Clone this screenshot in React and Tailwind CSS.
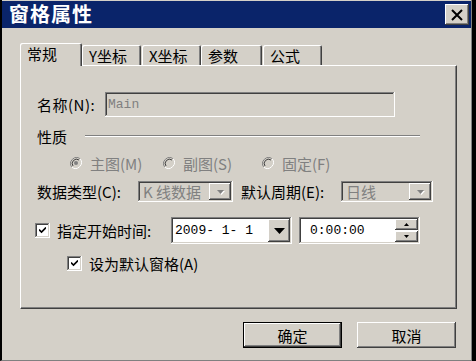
import React from "react";

const raised =
  "shadow-[inset_-1px_-1px_#404040,inset_1px_1px_#ffffff,inset_-2px_-2px_#808080]";
const sunken =
  "shadow-[inset_-1px_-1px_#ffffff,inset_1px_1px_#808080,inset_-2px_-2px_#d4d0c8,inset_2px_2px_#404040]";

function Arrow({ color = "#000", disabled = false, big = false }) {
  if (big) {
    return (
      <svg width="11" height="6" viewBox="0 0 11 6">
        <path d="M0 0h11L5.5 6z" fill={color} />
      </svg>
    );
  }
  return (
    <svg width="9" height="6" viewBox="0 0 9 6">
      {disabled && <path d="M2 2h7l-3.5 4z" fill="#fff" />}
      <path d="M1 1h7l-3.5 4z" fill={color} />
    </svg>
  );
}

function DropButton({ disabled, big, className }) {
  return (
    <div className={`flex items-center justify-center bg-[#d4d0c8] ${raised} ${className}`}>
      <Arrow color={disabled ? "#808080" : "#000"} disabled={disabled} big={big} />
    </div>
  );
}

function Check() {
  return (
    <div className={`w-[15px] h-[15px] bg-white flex items-center justify-center ${sunken}`}>
      <svg width="7" height="7" viewBox="0 0 7 7">
        <path d="M0 2.5l2.5 2.5L7 0.5" stroke="#000" strokeWidth="1.6" fill="none" />
      </svg>
    </div>
  );
}

function Radio({ checked, label }) {
  return (
    <div className="flex items-center gap-[8px] text-[#808080]">
      <svg width="12" height="12" viewBox="0 0 12 12">
        <path d="M10.2 1.8A6 6 0 0 0 1.8 10.2" stroke="#808080" fill="none" />
        <path d="M10.2 1.8A6 6 0 0 1 1.8 10.2" stroke="#ffffff" fill="none" />
        <circle cx="6" cy="6" r="4.5" fill="#d4d0c8" />
        <path d="M9 3A4.3 4.3 0 0 0 3 9" stroke="#404040" fill="none" />
        {checked && <circle cx="6" cy="6" r="2" fill="#808080" />}
      </svg>
      <span>{label}</span>
    </div>
  );
}

const tabs = [
  { name: "常规", w: "w-[62px]", active: true },
  { name: "Y坐标", w: "w-[59px]" },
  { name: "X坐标", w: "w-[59px] ml-px" },
  { name: "参数", w: "w-[61px]" },
  { name: "公式", w: "w-[59px] ml-px" },
];

export default function App() {
  return (
    <div className="w-[476px] h-[361px] bg-black flex font-['Noto_Sans_CJK_SC',sans-serif] text-[15px] leading-none text-black">
      <div className="w-[472px] h-[361px] bg-[#d4d0c8] border-l-2 border-l-black border-r border-r-[#808080] border-b border-b-[#808080] pt-px flex flex-col">
        {/* title bar */}
        <div className="h-[27px] bg-[#0a246a] flex items-start justify-between pl-[7px] pr-[2px]">
          <span className="text-white font-bold text-[20px] leading-[26px] tracking-[1px]">窗格属性</span>
          <div className={`mt-[3px] w-[24px] h-[21px] bg-[#d4d0c8] flex items-center justify-center ${raised}`}>
            <svg width="12" height="12" viewBox="0 0 12 12">
              <path d="M1 1L11 11M11 1L1 11" stroke="#000" strokeWidth="2" />
            </svg>
          </div>
        </div>

        {/* tabs */}
        <div className="ml-[18px] mt-[14px] flex items-end h-[23px]">
          {tabs.map((t) => (
            <div
              key={t.name}
              className={`${t.w} bg-[#d4d0c8] rounded-t-[2px] pl-[7px] flex items-center shadow-[inset_1px_1px_#ffffff,inset_-1px_0_#404040,inset_-2px_0_#808080] ${
                t.active ? "h-[23px] relative z-10 -mb-px pb-[2px]" : "h-[20px]"
              }`}
            >
              {t.name}
            </div>
          ))}
        </div>

        {/* panel */}
        <div className="ml-[18px] w-[437px] h-[244px] border-t border-l border-white shadow-[inset_-1px_-1px_#808080] border-r border-b border-r-[#404040] border-b-[#404040] pl-[16px] flex flex-col">
          <div className="mt-[26px] h-[25px] flex items-center">
            <span className="w-[68px] tracking-[0.5px]">名称(N):</span>
            <div className={`w-[290px] h-[25px] flex items-center pl-[3px] text-[#808080] font-['Liberation_Mono',monospace] text-[13px] ${sunken}`}>
              Main
            </div>
          </div>

          <div className="mt-[11px] h-[16px] flex items-center">
            <span className="w-[31px]">性质</span>
            <div className="ml-[17px] w-[335px] h-[2px] border-t border-t-[#808080] border-b border-b-white" />
          </div>

          <div className="mt-[11px] h-[16px] flex items-center pl-[33px]">
            <div className="w-[93px]">
              <Radio checked label="主图(M)" />
            </div>
            <div className="w-[99px]">
              <Radio label="副图(S)" />
            </div>
            <Radio label="固定(F)" />
          </div>

          <div className="mt-[10px] h-[21px] flex items-center">
            <span className="w-[101px]">数据类型(C):</span>
            <div className={`w-[95px] h-[21px] flex items-center justify-between pl-[5px] pr-[2px] text-[#808080] ${sunken}`}>
              <span>K 线数据</span>
              <DropButton disabled className="w-[22px] h-[17px]" />
            </div>
            <span className="ml-[8px] w-[100px]">默认周期(E):</span>
            <div className={`w-[92px] h-[21px] flex items-center justify-between pl-[5px] pr-[2px] text-[#808080] ${sunken}`}>
              <span>日线</span>
              <DropButton disabled className="w-[22px] h-[17px]" />
            </div>
          </div>

          <div className="mt-[15px] h-[27px] flex items-center">
            <div className="-ml-[2px]">
              <Check />
            </div>
            <span className="ml-[7px] w-[114px]">指定开始时间:</span>
            <div className={`w-[121px] h-[27px] bg-white flex items-center justify-between pl-[4px] pr-[2px] font-['Liberation_Mono',monospace] text-[13px] ${sunken}`}>
              <span className="whitespace-pre">2009- 1- 1</span>
              <DropButton big className="w-[22px] h-[23px]" />
            </div>
            <div className={`ml-[7px] w-[121px] h-[27px] bg-white flex items-center justify-between pl-[11px] pr-[2px] font-['Liberation_Mono',monospace] text-[13px] ${sunken}`}>
              <span>0:00:00</span>
              <div className="flex flex-col gap-[1px]">
                <div className={`w-[23px] h-[11px] bg-[#d4d0c8] flex items-center justify-center ${raised}`}>
                  <svg width="5" height="3" viewBox="0 0 5 3"><path d="M0 3h5L2.5 0z" fill="#000" /></svg>
                </div>
                <div className={`w-[23px] h-[11px] bg-[#d4d0c8] flex items-center justify-center ${raised}`}>
                  <svg width="5" height="3" viewBox="0 0 5 3"><path d="M0 0h5L2.5 3z" fill="#000" /></svg>
                </div>
              </div>
            </div>
          </div>

          <div className="mt-[12px] h-[15px] flex items-center pl-[30px]">
            <Check />
            <span className="ml-[7px]">设为默认窗格(A)</span>
          </div>
        </div>

        {/* buttons */}
        <div className="mt-[13px] flex justify-end gap-[15px] mr-[15px]">
          <div className="w-[99px] h-[26px] border border-black">
            <div className={`w-full h-full bg-[#d4d0c8] flex items-center justify-center ${raised}`}>确定</div>
          </div>
          <div className={`w-[99px] h-[26px] bg-[#d4d0c8] flex items-center justify-center ${raised}`}>取消</div>
        </div>
      </div>
    </div>
  );
}
